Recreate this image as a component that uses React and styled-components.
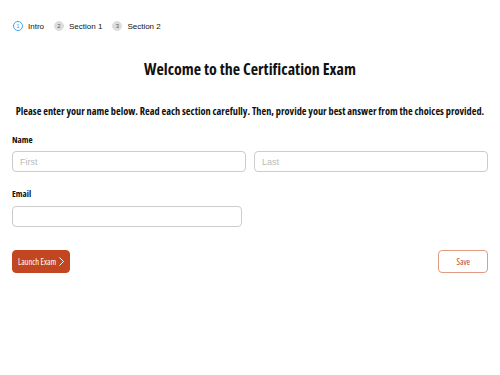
import React from 'react';
import styled, { createGlobalStyle } from 'styled-components';

const GlobalStyle = createGlobalStyle`
  body {
    margin: 0;
    background: #fff;
    font-family: "Open Sans", "Noto Sans", sans-serif;
    color: #111;
  }
`;

const Page = styled.div`
  padding: 21px 12px 0 12px;
`;

const Steps = styled.ol`
  display: flex;
  align-items: center;
  gap: 10px;
  margin: 0;
  padding: 0 0 0 1px;
  list-style: none;
  font-family: "Liberation Sans", Arial, sans-serif;
  font-size: 8px;
  color: #111;
`;

const Step = styled.li`
  display: flex;
  align-items: center;
  gap: 5px;
`;

const StepNum = styled.span`
  width: 10px;
  height: 10px;
  box-sizing: border-box;
  border-radius: 50%;
  display: flex;
  align-items: center;
  justify-content: center;
  font-size: 6px;
  background: ${p => (p.active ? '#fff' : '#ddd')};
  border: 1px solid ${p => (p.active ? '#4aa3f0' : '#ddd')};
  color: ${p => (p.active ? '#4aa3f0' : '#555')};
`;

const Title = styled.h1`
  margin: 27px 0 0;
  text-align: center;
  font-size: 16px;
  font-weight: 700;
  font-stretch: condensed;
`;

const Intro = styled.p`
  margin: 24px 0 0;
  text-align: center;
  white-space: nowrap;
  font-size: 10.3px;
  font-weight: 700;
  font-stretch: condensed;
`;

const Label = styled.div`
  margin-top: ${p => p.top}px;
  font-size: 9px;
  font-weight: 700;
  font-stretch: condensed;
`;

const Row = styled.div`
  display: grid;
  grid-template-columns: 1fr 1fr;
  gap: 8px;
  margin-top: 5px;
`;

const Input = styled.input`
  box-sizing: border-box;
  width: ${p => p.width || '100%'};
  height: 21px;
  border: 1px solid #ccc;
  border-radius: 4px;
  padding: 0 7px;
  font-family: "Liberation Sans", Arial, sans-serif;
  font-size: 9px;
  outline: none;
  &::placeholder {
    color: #bbb;
  }
`;

const Single = styled.div`
  margin-top: 2px;
`;

const Actions = styled.div`
  display: flex;
  justify-content: space-between;
  margin-top: 23px;
`;

const Button = styled.button`
  height: 23px;
  box-sizing: border-box;
  border-radius: 4px;
  padding: 0 ${p => (p.primary ? '5px' : '17px')};
  display: flex;
  align-items: center;
  gap: 3px;
  font-family: "Open Sans", sans-serif;
  font-stretch: condensed;
  font-size: 8.5px;
  cursor: pointer;
  background: ${p => (p.primary ? '#c2461f' : '#fff')};
  color: ${p => (p.primary ? '#fff' : '#c2461f')};
  border: 1px solid ${p => (p.primary ? '#c2461f' : '#e29a82')};
`;

export default function App() {
  return (
    <>
      <GlobalStyle />
      <Page>
        <Steps>
          <Step><StepNum active>1</StepNum>Intro</Step>
          <Step><StepNum>2</StepNum>Section 1</Step>
          <Step><StepNum>3</StepNum>Section 2</Step>
        </Steps>
        <Title>Welcome to the Certification Exam</Title>
        <Intro>Please enter your name below. Read each section carefully. Then, provide your best answer from the choices provided.</Intro>
        <Label top={15}>Name</Label>
        <Row>
          <Input placeholder="First" />
          <Input placeholder="Last" />
        </Row>
        <Label top={15}>Email</Label>
        <Single>
          <Input width="230px" />
        </Single>
        <Actions>
          <Button primary>
            Launch Exam
            <svg width="5" height="9" viewBox="0 0 5 9" fill="none" stroke="#fff" strokeWidth="1">
              <path d="M0.5 0.5 L4.5 4.5 L0.5 8.5" />
            </svg>
          </Button>
          <Button>Save</Button>
        </Actions>
      </Page>
    </>
  );
}
